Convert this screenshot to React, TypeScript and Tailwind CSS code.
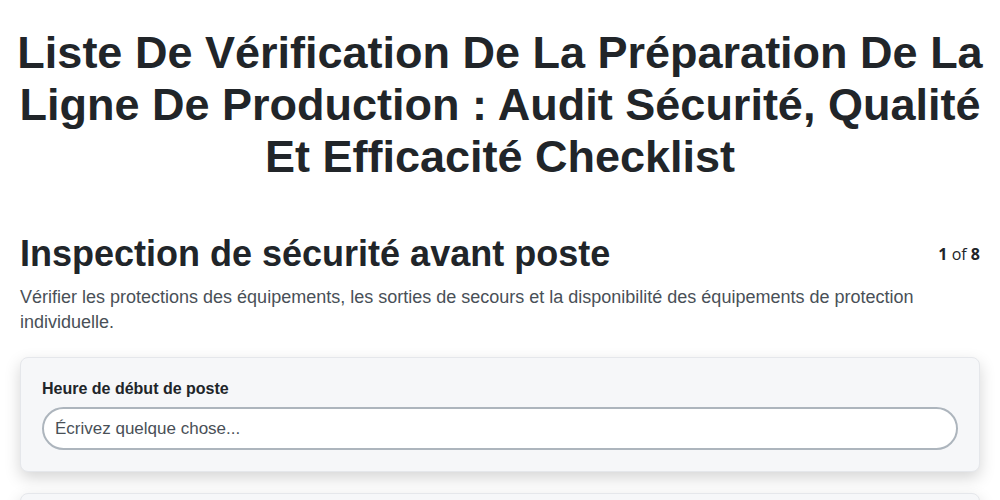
export default function App() {
  return (
    <div className="min-h-screen bg-white text-[#212529]" style={{ fontFamily: '"Liberation Sans", Arial, sans-serif' }}>
      <h1 className="px-2 pt-[27px] text-center text-[45px] font-bold leading-[52px]">
        Liste De Vérification De La Préparation De La Ligne De Production : Audit Sécurité, Qualité Et Efficacité Checklist
      </h1>

      <section className="mt-[49px] px-5">
        <div className="flex items-center justify-between">
          <h2 className="text-[36px] font-bold leading-[43px]">Inspection de sécurité avant poste</h2>
          <div className="text-base text-[#212529]" style={{ fontFamily: '"Open Sans", sans-serif' }}>
            <span className="font-bold">1</span> of <span className="font-bold">8</span>
          </div>
        </div>
        <p className="mt-[10px] text-lg leading-[25px] text-[#495057]">
          Vérifier les protections des équipements, les sorties de secours et la disponibilité des équipements de protection individuelle.
        </p>

        <div className="mt-[22px] flex flex-col gap-[21px]">
          <div className="rounded-lg border border-[#e5e7eb] bg-[#f6f7f9] p-[21px] shadow-[0_6px_16px_rgba(0,0,0,0.17)]">
            <label className="mb-2 block text-base font-bold leading-5 text-[#212529]">Heure de début de poste</label>
            <input
              type="text"
              placeholder="Écrivez quelque chose..."
              className="h-[43px] w-full rounded-full border-2 border-[#adb5bd] bg-white px-[11px] text-[17px] text-[#212529] placeholder:text-[#495057] focus:outline-none"
            />
          </div>
          <div className="h-[100px] rounded-lg border border-[#e5e7eb] bg-[#f6f7f9] p-[21px] shadow-[0_6px_16px_rgba(0,0,0,0.17)]" />
        </div>
      </section>
    </div>
  );
}
